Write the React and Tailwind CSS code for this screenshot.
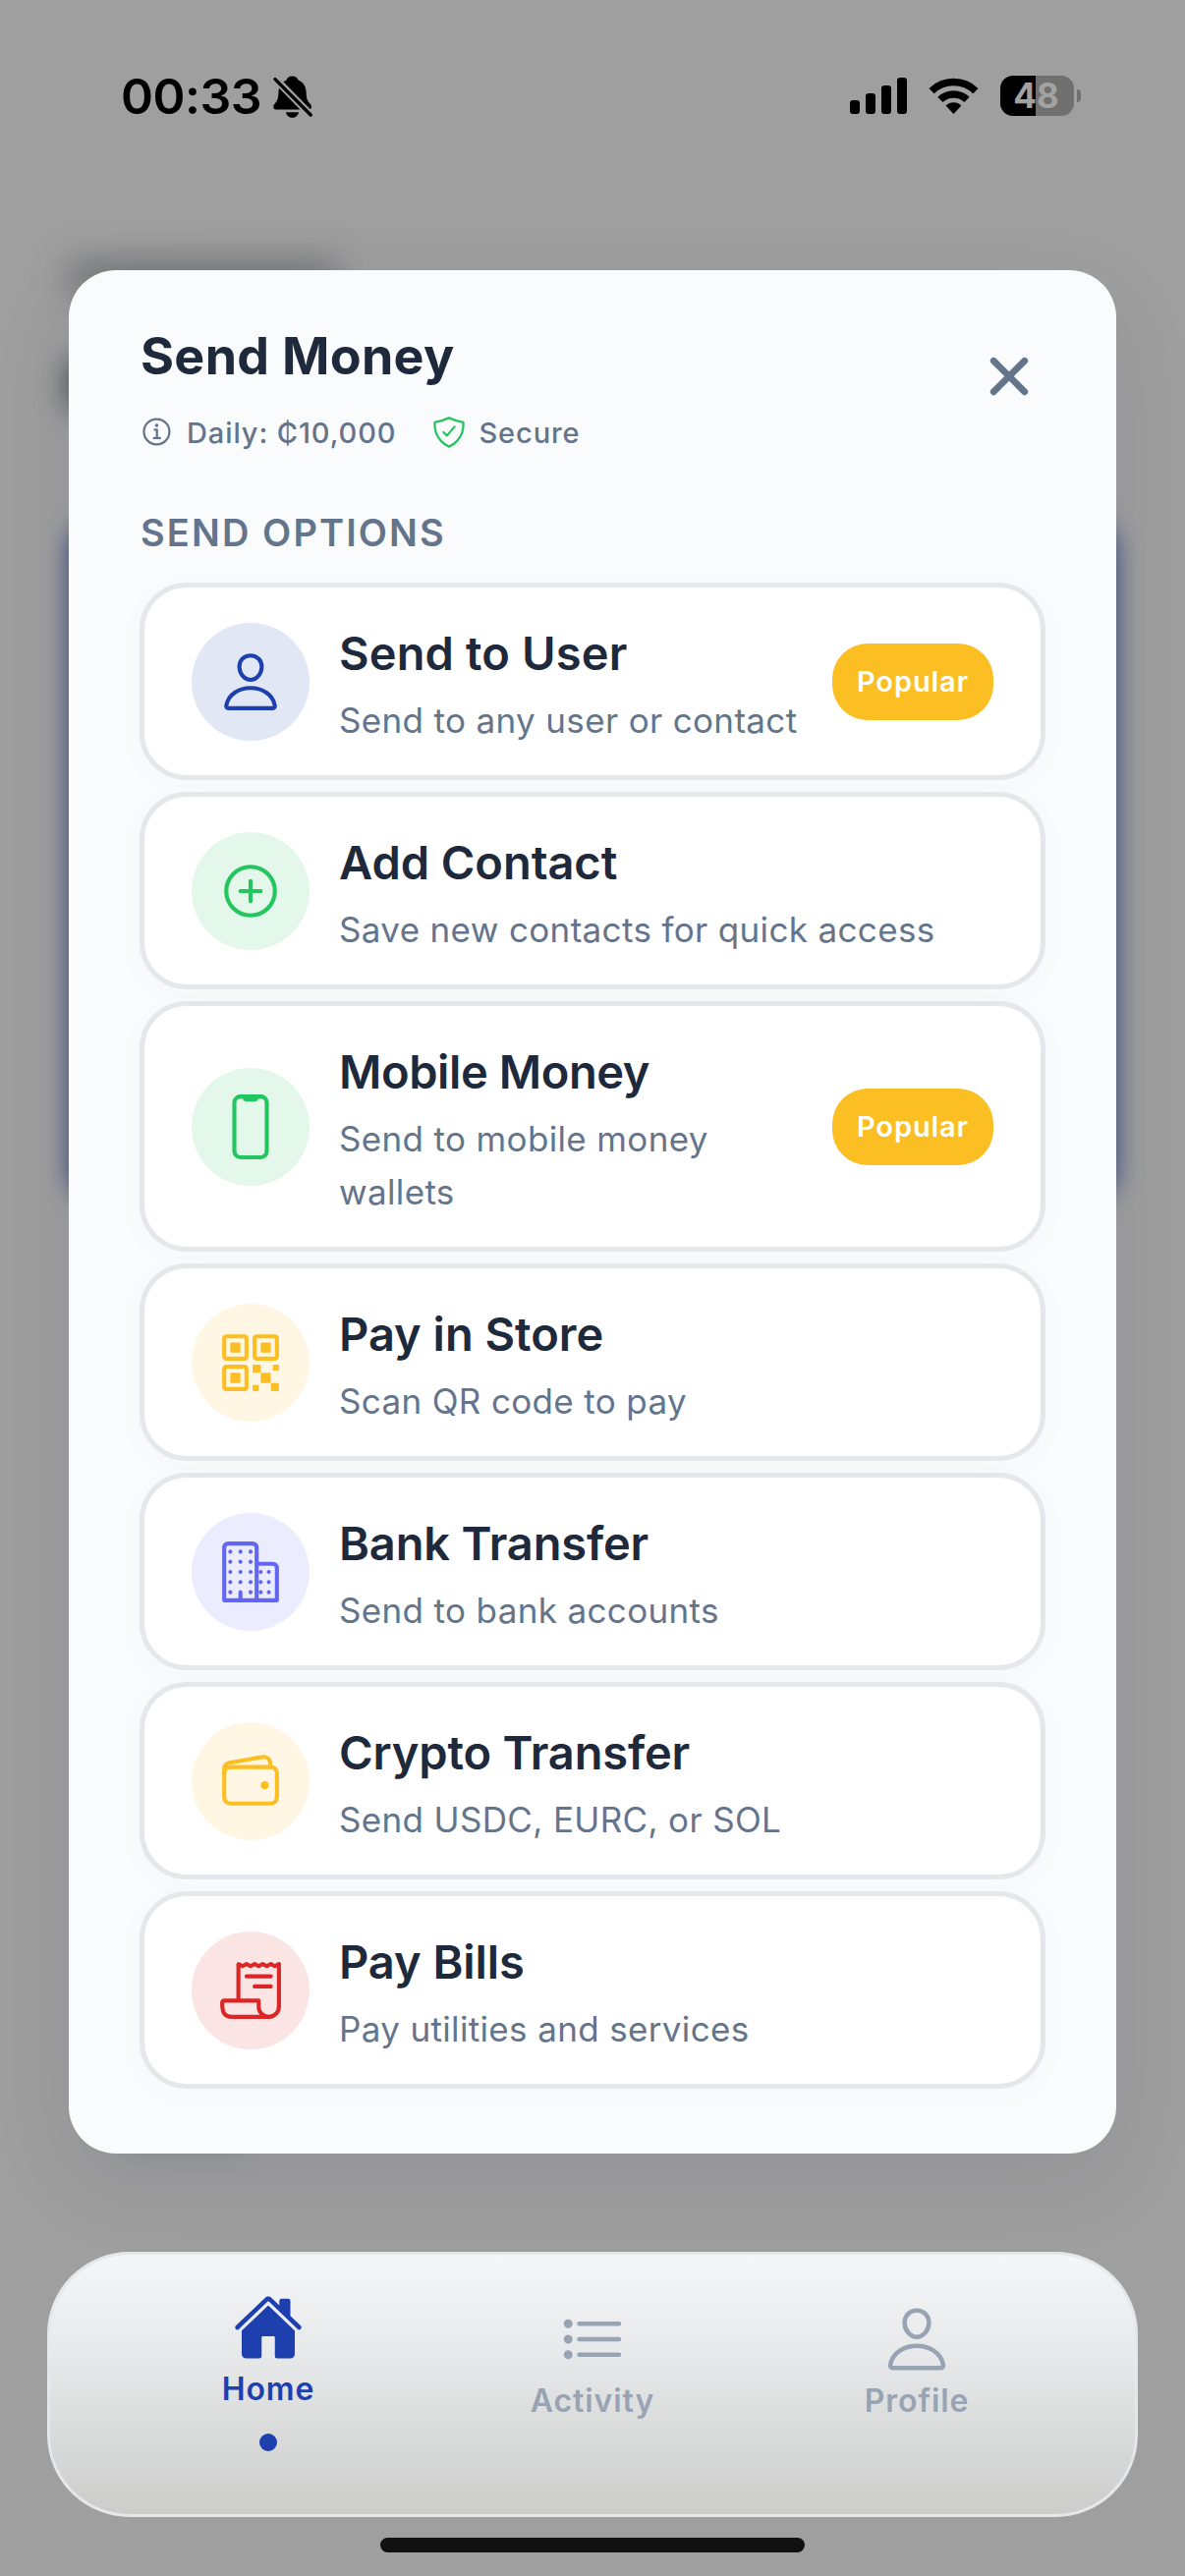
import {
  IoAddCircleOutline,
  IoBusinessOutline,
  IoClose,
  IoHome,
  IoInformationCircleOutline,
  IoListOutline,
  IoPersonOutline,
  IoPhonePortraitOutline,
  IoQrCodeOutline,
  IoReceiptOutline,
  IoShieldCheckmarkOutline,
  IoWalletOutline,
} from "react-icons/io5";

const OPTIONS = [
  { title: "Send to User", text: "Send to any user or contact", Icon: IoPersonOutline, tone: "bg-[#e1e7f5] text-[#1e40af]", tracking: "tracking-[0.15px]", popular: true },
  { title: "Add Contact", text: "Save new contacts for quick access", Icon: IoAddCircleOutline, tone: "bg-[#e3f7ea] text-[#22c55e]", tracking: "tracking-[-0.05px]" },
  { title: "Mobile Money", text: "Send to mobile money wallets", Icon: IoPhonePortraitOutline, tone: "bg-[#e3f7ea] text-[#22c55e]", tracking: "tracking-[-0.4px]", popular: true },
  { title: "Pay in Store", text: "Scan QR code to pay", Icon: IoQrCodeOutline, tone: "bg-[#fff7e3] text-[#fbbf24]", tracking: "tracking-normal" },
  { title: "Bank Transfer", text: "Send to bank accounts", Icon: IoBusinessOutline, tone: "bg-[#ebecfe] text-[#6366f1]", tracking: "tracking-[-0.15px]" },
  { title: "Crypto Transfer", text: "Send USDC, EURC, or SOL", Icon: IoWalletOutline, tone: "bg-[#fff7e3] text-[#fbbf24]", tracking: "tracking-[-0.15px]" },
  { title: "Pay Bills", text: "Pay utilities and services", Icon: IoReceiptOutline, tone: "bg-[#fae4e4] text-[#dc2626]", tracking: "tracking-[-0.05px]" },
];

function BellOff() {
  return (
    <svg className="mt-2 ml-3 h-11 w-10" viewBox="0 0 40 44">
      <path
        fill="#000"
        d="M19.5.5C22.8.5 25 2.3 25.6 4.8 31 6.8 33.5 11.5 33.7 17.5 33.9 24 35 26 38 29 40 31.5 39 34.5 36 34.5H3C0 34.5-.5 31.5 1.2 29 4 26 5.2 24 5.4 17.5 5.6 11.5 8 6.8 13.4 4.8 14 2.3 16.2.5 19.5.5ZM13 37.2H26C25.4 40.6 22.8 42.8 19.5 42.8S13.6 40.6 13 37.2Z"
      />
      <path d="M-1 0 41 43" stroke="#9f9f9f" strokeWidth="7.6" />
      <path d="M2 3.6 38.2 40" stroke="#000" strokeWidth="3.4" strokeLinecap="round" />
    </svg>
  );
}

function Signal() {
  return (
    <div className="mt-[10px] flex h-[37px] items-end gap-[6px]">
      <i className="h-[14px] w-[10px] rounded-[3px] bg-black" />
      <i className="h-[21px] w-[10px] rounded-[3px] bg-black" />
      <i className="h-[29px] w-[10px] rounded-[3px] bg-black" />
      <i className="h-[37px] w-[10px] rounded-[3px] bg-black" />
    </div>
  );
}

function Wifi() {
  return (
    <svg className="mt-[10px] ml-[22px] h-[38px] w-[51px]" viewBox="0 0 51 38" fill="none" stroke="#000" strokeWidth="7.5">
      <path d="M3.1 13.6A32.3 32.3 0 0 1 47.9 13.6" />
      <path d="M11.9 22.4A19.6 19.6 0 0 1 39.1 22.4" />
      <path d="M17.6 28.4A11.3 11.3 0 0 1 33.4 28.4L25.5 37Z" fill="#000" stroke="none" />
    </svg>
  );
}

function Battery() {
  return (
    <div className="mt-2 ml-[22px] flex items-center gap-[3px]">
      <div className="flex h-[41px] w-[75px] items-center justify-center rounded-[13px] bg-linear-to-r from-black from-48% to-[#707070] to-48% pr-[2px] text-[35px] leading-none font-bold text-[#a2a2a2]">
        48
      </div>
      <i className="h-[13px] w-1 rounded-r-full bg-[#707070]" />
    </div>
  );
}

function StatusBar() {
  return (
    <header className="flex h-[275px] items-start justify-between pt-[69px] pr-[106px] pl-[123px]">
      <div className="flex items-start">
        <span className="-mt-px text-[50px] leading-[60px] font-semibold tracking-[-0.5px] text-black">00:33</span>
        <BellOff />
      </div>
      <div className="flex items-start">
        <Signal />
        <Wifi />
        <Battery />
      </div>
    </header>
  );
}

function Option({ title, text, Icon, tone, tracking, popular }) {
  return (
    <li className="flex items-center rounded-[48px] border-[5px] border-[#e5e7eb] bg-white px-12 shadow-[0_6px_36px_rgba(100,110,150,0.02)]">
      <div className={"flex size-[120px] shrink-0 items-center justify-center rounded-full " + tone}>
        <Icon size={66} />
      </div>
      <div className="ml-[30px] flex flex-1 flex-col gap-3 pt-[38px] pb-[29px]">
        <h3 className={"text-[47px] leading-[58px] font-semibold text-[#1e293b] " + tracking}>{title}</h3>
        <p className="text-[35px] leading-[54px] tracking-[0.35px] text-[#64748b]">{text}</p>
      </div>
      {popular && (
        <span className="ml-6 flex h-[78px] w-[164px] items-center justify-center rounded-[36px] bg-[#fbbf24] pt-px text-[29px] font-semibold tracking-[0.9px] text-white">
          Popular
        </span>
      )}
    </li>
  );
}

function Sheet() {
  return (
    <main className="mx-[70px] h-[1917px] rounded-[48px] bg-[#f9fbfd] px-[72px] pt-[58px] shadow-[0_30px_90px_rgba(20,25,70,0.08)]">
      <div className="flex items-start justify-between">
        <div>
          <h1 className="ml-px text-[52px] leading-[60px] font-bold tracking-[0.3px] text-[#1e293b]">Send Money</h1>
          <div className="mt-[29px] flex h-9 items-center text-[29px] font-medium tracking-[0.9px] text-[#64748b]">
            <IoInformationCircleOutline size={36} />
            <span className="mt-px ml-3">Daily: ₵10,000</span>
            <IoShieldCheckmarkOutline size={36} className="ml-9 text-[#22c55e]" />
            <span className="mt-px ml-3">Secure</span>
          </div>
        </div>
        <button className="mt-[14px] mr-px text-[#64748b]">
          <IoClose size={72} />
        </button>
      </div>
      <h2 className="mt-[61px] ml-px text-[38px] leading-[46px] font-semibold tracking-[2.1px] text-[#64748b]">SEND OPTIONS</h2>
      <ul className="mt-7 flex flex-col gap-3">
        {OPTIONS.map((option) => (
          <Option key={option.title} {...option} />
        ))}
      </ul>
    </main>
  );
}

function TabBar() {
  return (
    <nav className="mx-12 mt-[100px] grid h-[270px] grid-cols-3 rounded-[84px] border-[3px] border-[#e5e7eb] bg-linear-to-b from-[#f5f6f9] via-[#e6e8e9] via-40% to-[#cccdcb] px-[57px] text-[32px] leading-10 font-semibold tracking-[0.9px] text-[#98a3b3]">
      <div className="flex flex-col items-center pt-[38px] text-[#1e40af]">
        <IoHome size={72} />
        <span className="mt-[7px]">Home</span>
        <i className="mt-[25px] size-[18px] rounded-full bg-[#1e40af]" />
      </div>
      <div className="flex flex-col items-center pt-[50px]">
        <IoListOutline size={72} />
        <span className="mt-[7px]">Activity</span>
      </div>
      <div className="flex flex-col items-center pt-[50px]">
        <IoPersonOutline size={72} />
        <span className="mt-[7px]">Profile</span>
      </div>
    </nav>
  );
}

/* Blurred home screen that shows round the edges of the sheet */
function Backdrop() {
  return (
    <div className="absolute inset-0 -z-10">
      <div className="absolute top-[268px] left-[72px] h-[34px] w-[272px] bg-[#3a3c46]/50 blur-[18px]" />
      <div className="absolute top-[366px] left-[68px] h-[50px] w-[300px] bg-[#1c2330]/65 blur-[15px]" />
      <div className="absolute top-[530px] left-[71px] h-[692px] w-[1064px] rounded-[30px] bg-[#1b3076]/85 blur-[13px]" />
      <div className="absolute top-[2140px] left-[120px] h-[44px] w-[130px] bg-[#3c5068]/30 blur-[18px]" />
    </div>
  );
}

export default function App() {
  return (
    <div className="relative isolate flex h-[2622px] w-[1206px] flex-col overflow-hidden bg-[#9f9f9f] font-['Inter',sans-serif]">
      <Backdrop />
      <StatusBar />
      <Sheet />
      <TabBar />
      <div className="mx-auto mt-[21px] h-[15px] w-[432px] rounded-full bg-[#111]" />
    </div>
  );
}
